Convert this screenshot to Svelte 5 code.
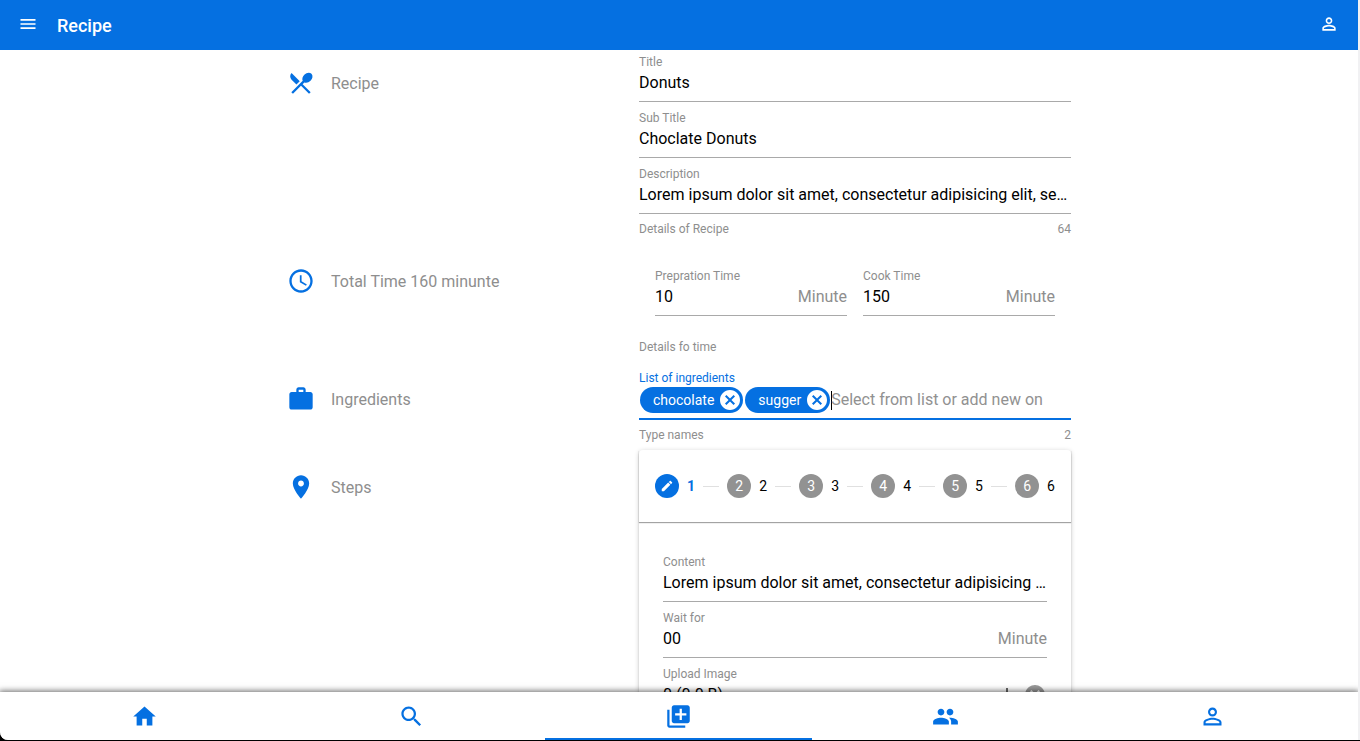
<script>
  const icons = {
    menu: 'M3 18h18v-2H3v2zm0-5h18v-2H3v2zm0-7v2h18V6H3z',
    person:
      'M12 5.9c1.16 0 2.1.94 2.1 2.1s-.94 2.1-2.1 2.1S9.9 9.16 9.9 8s.94-2.1 2.1-2.1m0 9c2.97 0 6.1 1.46 6.1 2.1v1.1H5.9V17c0-.64 3.13-2.1 6.1-2.1M12 4C9.79 4 8 5.79 8 8s1.79 4 4 4 4-1.79 4-4-1.79-4-4-4zm0 9c-2.67 0-8 1.34-8 4v3h16v-3c0-2.66-5.33-4-8-4z',
    recipe:
      'M8.1 13.34l2.83-2.83L3.91 3.5c-1.56 1.56-1.56 4.09 0 5.66l4.19 4.18zm6.78-1.81c1.53.71 3.68.21 5.27-1.38 1.91-1.91 2.28-4.65.81-6.12-1.46-1.46-4.2-1.1-6.12.81-1.59 1.59-2.09 3.74-1.38 5.27L3.7 19.87l1.41 1.41L12 14.41l6.88 6.88 1.41-1.41L13.41 13l1.47-1.47z',
    clock:
      'M11.99 2C6.47 2 2 6.48 2 12s4.47 10 9.99 10C17.52 22 22 17.52 22 12S17.52 2 11.99 2zM12 20c-4.42 0-8-3.58-8-8s3.58-8 8-8 8 3.58 8 8-3.58 8-8 8zm.5-13H11v6l5.25 3.15.75-1.23-4.5-2.67z',
    work: 'M20 6h-4V4c0-1.11-.89-2-2-2h-4c-1.11 0-2 .89-2 2v2H4c-1.11 0-1.99.89-1.99 2L2 19c0 1.11.89 2 2 2h16c1.11 0 2-.89 2-2V8c0-1.11-.89-2-2-2zm-6 0h-4V4h4v2z',
    place:
      'M12 2C8.13 2 5 5.13 5 9c0 5.25 7 13 7 13s7-7.75 7-13c0-3.87-3.13-7-7-7zm0 9.5c-1.38 0-2.5-1.12-2.5-2.5s1.12-2.5 2.5-2.5 2.5 1.12 2.5 2.5-1.12 2.5-2.5 2.5z',
    cancel:
      'M12 2C6.47 2 2 6.47 2 12s4.47 10 10 10 10-4.47 10-10S17.53 2 12 2zm5 13.59L15.59 17 12 13.41 8.41 17 7 15.59 10.59 12 7 8.41 8.41 7 12 10.59 15.59 7 17 8.41 13.41 12 17 15.59z',
    edit: 'M3 17.25V21h3.75L17.81 9.94l-3.75-3.75L3 17.25zM20.71 7.04c.39-.39.39-1.02 0-1.41l-2.34-2.34c-.39-.39-1.02-.39-1.41 0l-1.83 1.83 3.75 3.75 1.83-1.83z',
    add: 'M19 13h-6v6h-2v-6H5v-2h6V5h2v6h6v2z',
    home: 'M10 20v-6h4v6h5v-8h3L12 3 2 12h3v8z',
    search:
      'M15.5 14h-.79l-.28-.27C15.41 12.59 16 11.11 16 9.5 16 5.91 13.09 3 9.5 3S3 5.91 3 9.5 5.91 16 9.5 16c1.61 0 3.09-.59 4.23-1.57l.27.28v.79l5 4.99L20.49 19l-4.99-5zm-6 0C7.01 14 5 11.99 5 9.5S7.01 5 9.5 5 14 7.01 14 9.5 11.99 14 9.5 14z',
    library:
      'M4 6H2v14c0 1.1.9 2 2 2h14v-2H4V6zm16-4H8c-1.1 0-2 .9-2 2v12c0 1.1.9 2 2 2h12c1.1 0 2-.9 2-2V4c0-1.1-.9-2-2-2zm-1 9h-4v4h-2v-4H9V9h4V5h2v4h4v2z',
    people:
      'M16 11c1.66 0 2.99-1.34 2.99-3S17.66 5 16 5c-1.66 0-3 1.34-3 3s1.34 3 3 3zm-8 0c1.66 0 2.99-1.34 2.99-3S9.66 5 8 5C6.34 5 5 6.34 5 8s1.34 3 3 3zm0 2c-2.33 0-7 1.17-7 3.5V19h14v-2.5c0-2.33-4.67-3.5-7-3.5zm8 0c-.29 0-.62.02-.97.05 1.16.84 1.97 1.97 1.97 3.45V19h6v-2.5c0-2.33-4.67-3.5-7-3.5z',
  };

  const lorem = 'Lorem ipsum dolor sit amet, consectetur adipisicing elit, sed do';

  let title = $state('Donuts');
  let subTitle = $state('Choclate Donuts');
  let description = $state(lorem);
  let prep = $state('10');
  let cook = $state('150');
  let content = $state(lorem);
  let wait = $state('00');
  let chips = $state(['chocolate', 'sugger']);
  let draft = $state('');
  let step = $state(1);
  let tab = $state('library');

  const total = $derived(Number(prep) + Number(cook));
  const steps = [1, 2, 3, 4, 5, 6];
  const tabs = [
    ['home', 'Home'],
    ['search', 'Search'],
    ['library', 'New recipe'],
    ['people', 'People'],
    ['person', 'Profile'],
  ];

  function addChip(event) {
    if (event.key === 'Enter' && draft.trim()) {
      chips.push(draft.trim());
      draft = '';
    }
  }
</script>

{#snippet icon(name)}
  <svg class="icon" viewBox="0 0 24 24" aria-hidden="true"><path d={icons[name]} /></svg>
{/snippet}

{#snippet side(name, text)}
  <div class="side">{@render icon(name)}<span>{text}</span></div>
{/snippet}

<div class="shell">
  <header>
    <button class="bar-button" aria-label="Menu">{@render icon('menu')}</button>
    <h1>Recipe</h1>
    <button class="bar-button" aria-label="Account">{@render icon('person')}</button>
  </header>

  <main>
    <div class="form">
      <section class="row">
        {@render side('recipe', 'Recipe')}
        <div>
          <div class="field">
            <label for="title">Title</label>
            <div class="control"><input id="title" bind:value={title} /></div>
          </div>
          <div class="field">
            <label for="subtitle">Sub Title</label>
            <div class="control"><input id="subtitle" bind:value={subTitle} /></div>
          </div>
          <div class="field">
            <label for="description">Description</label>
            <div class="control"><input id="description" bind:value={description} /></div>
          </div>
          <div class="hint"><span>Details of Recipe</span><span>{description.length}</span></div>
        </div>
      </section>

      <section class="row">
        {@render side('clock', `Total Time ${total} minunte`)}
        <div>
          <div class="times">
            <div class="field">
              <label for="prep">Prepration Time</label>
              <div class="control"><input id="prep" bind:value={prep} /><span class="suffix">Minute</span></div>
            </div>
            <div class="field">
              <label for="cook">Cook Time</label>
              <div class="control"><input id="cook" bind:value={cook} /><span class="suffix">Minute</span></div>
            </div>
          </div>
          <div class="hint"><span>Details fo time</span></div>
        </div>
      </section>

      <section class="row">
        {@render side('work', 'Ingredients')}
        <div>
          <div class="field active">
            <label for="ingredients">List of ingredients</label>
            <div class="control chips">
              {#each chips as chip, i}
                <span class="chip">
                  {chip}
                  <button aria-label="Remove {chip}" onclick={() => chips.splice(i, 1)}>{@render icon('cancel')}</button>
                </span>
              {/each}
              <span class="caret"></span>
              <input
                id="ingredients"
                placeholder="Select from list or add new on"
                bind:value={draft}
                onkeydown={addChip}
              />
            </div>
          </div>
          <div class="hint"><span>Type names</span><span>{chips.length}</span></div>
        </div>
      </section>

      <section class="row">
        {@render side('place', 'Steps')}
        <div class="card">
          <div class="stepper">
            {#each steps as n}
              {#if n > 1}<span class="line"></span>{/if}
              <button class="step" class:current={step === n} onclick={() => (step = n)}>
                <span class="dot">{#if step === n}{@render icon('edit')}{:else}{n}{/if}</span>
                <span>{n}</span>
              </button>
            {/each}
          </div>
          <div class="step-body">
            <div class="field">
              <label for="content">Content</label>
              <div class="control"><input id="content" bind:value={content} /></div>
            </div>
            <div class="field">
              <label for="wait">Wait for</label>
              <div class="control"><input id="wait" bind:value={wait} /><span class="suffix">Minute</span></div>
            </div>
            <div class="field">
              <label for="upload">Upload Image</label>
              <div class="control">
                <input id="upload" value="0 (0.0 B)" readonly />
                <button class="tool" aria-label="Add image">{@render icon('add')}</button>
                <button class="tool clear" aria-label="Clear images">{@render icon('cancel')}</button>
              </div>
            </div>
          </div>
        </div>
      </section>
    </div>
  </main>

  <nav>
    {#each tabs as [name, label]}
      <button class="tab" class:selected={tab === name} aria-label={label} onclick={() => (tab = name)}>
        {@render icon(name)}
      </button>
    {/each}
  </nav>
</div>

<style>
  :global(body) {
    background: #000;
  }

  .shell {
    --blue: #0570e1;
    --muted: #8e8e8e;
    box-sizing: border-box;
    display: flex;
    flex-direction: column;
    height: calc(100vh - 1px);
    overflow: hidden;
    background: #fff;
    border-right: 2px solid #f1f1f3;
    border-bottom-left-radius: 8px;
    color: #000;
    font: 16px/24px Roboto, 'Liberation Sans', sans-serif;
  }

  button,
  input {
    margin: 0;
    padding: 0;
    border: 0;
    background: none;
    color: inherit;
    font: inherit;
    outline: none;
  }

  button {
    cursor: pointer;
  }

  .icon {
    display: block;
    flex: none;
    width: 28px;
    height: 28px;
    fill: currentColor;
  }

  header {
    display: flex;
    flex: none;
    align-items: center;
    height: 50px;
    padding: 0 19px 0 18px;
    background: var(--blue);
    color: #fff;
  }

  .bar-button {
    padding-bottom: 2px;
  }

  .bar-button .icon {
    width: 20px;
    height: 20px;
  }

  h1 {
    flex: 1;
    margin: 2px 0 0 19px;
    font-size: 18px;
    font-weight: 500;
    line-height: 24px;
  }

  main {
    flex: 1;
    min-height: 0;
    overflow: hidden;
  }

  .form {
    max-width: 784px;
    margin: -4px auto 0;
  }

  .row {
    display: grid;
    grid-template-columns: 22fr 27fr;
  }

  .row > div {
    min-width: 0;
  }

  .side {
    display: flex;
    align-items: center;
    align-self: start;
    gap: 16px;
    height: 74px;
    color: var(--muted);
  }

  .side span {
    padding-top: 2px;
  }

  .side .icon {
    color: var(--blue);
  }

  .field {
    display: flex;
    flex: 1;
    flex-direction: column;
    min-width: 0;
    padding: 8px 0 5px;
    border-bottom: 1px solid #a9a9a9;
  }

  .field label {
    color: var(--muted);
    font-size: 12px;
    line-height: 16px;
  }

  .field input {
    flex: 1;
    width: 100%;
    min-width: 0;
    height: 24px;
    text-overflow: ellipsis;
  }

  .field input::placeholder {
    color: #919191;
    opacity: 1;
  }

  .control {
    display: flex;
    align-items: center;
    height: 26px;
  }

  .suffix {
    color: var(--muted);
  }

  .hint {
    display: flex;
    justify-content: space-between;
    padding: 8px 0;
    color: var(--muted);
    font-size: 12px;
    line-height: 14px;
  }

  .times {
    display: flex;
    gap: 16px;
    padding: 16px;
  }

  .field.active {
    padding-bottom: 4px;
    border-bottom: 2px solid var(--blue);
  }

  .field.active label {
    color: var(--blue);
  }

  .control.chips {
    height: 28px;
  }

  .chip {
    display: flex;
    align-items: center;
    gap: 4px;
    height: 26px;
    margin: 0 1px;
    padding: 0 1px 0 13px;
    border-radius: 13px;
    background: var(--blue);
    color: #fff;
    font-size: 14px;
    line-height: 20px;
  }

  .chip .icon {
    width: 24px;
    height: 24px;
  }

  .caret {
    width: 1px;
    height: 19px;
    margin-right: -1px;
    background: #000;
  }

  .card {
    border-radius: 4px;
    box-shadow: 0 1px 5px rgba(0, 0, 0, 0.2), 0 2px 2px rgba(0, 0, 0, 0.14), 0 3px 1px -2px rgba(0, 0, 0, 0.12);
  }

  .stepper {
    display: flex;
    align-items: center;
    gap: 8px;
    height: 72px;
    padding: 0 16px;
    box-shadow: 0 1px 1px rgba(0, 0, 0, 0.36);
    font-size: 14px;
  }

  .line {
    flex: 1;
    height: 1px;
    background: #e0e0e0;
  }

  .step {
    display: flex;
    align-items: center;
    gap: 8px;
  }

  .step.current {
    color: var(--blue);
    font-weight: 700;
  }

  .dot {
    display: grid;
    place-items: center;
    width: 24px;
    height: 24px;
    border-radius: 50%;
    background: #929292;
    color: #fff;
  }

  .current .dot {
    background: var(--blue);
  }

  .dot .icon {
    width: 14px;
    height: 14px;
  }

  .step-body {
    padding: 24px;
  }

  .tool {
    margin-left: 4px;
    color: #666;
  }

  .tool.clear {
    color: #9a9a9a;
  }

  .tool .icon {
    width: 24px;
    height: 24px;
  }

  nav {
    position: relative;
    display: flex;
    flex: none;
    height: 48px;
    padding: 0 12px 0 11px;
    background: #fff;
    box-shadow: 0 0 6px 1px rgba(0, 0, 0, 0.6);
  }

  .tab {
    box-sizing: border-box;
    display: grid;
    flex: 1;
    place-items: center;
    padding-top: 3px;
    border-bottom: 2px solid transparent;
    color: var(--blue);
  }

  .tab .icon {
    width: 27px;
    height: 27px;
  }

  .tab.selected {
    border-color: var(--blue);
  }
</style>
